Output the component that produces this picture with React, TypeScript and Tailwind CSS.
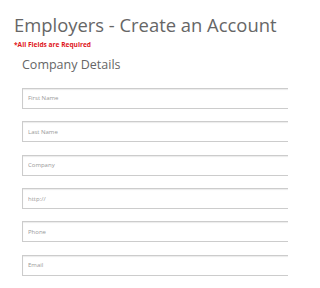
import React from "react";

const fields = ["First Name", "Last Name", "Company", "http://", "Phone", "Email"];

export default function App() {
  return (
    <div className="h-[288px] w-[288px] overflow-hidden bg-white font-['Open_Sans',sans-serif]">
      <div className="pl-[14px] pt-[13px]">
        <h1 className="whitespace-nowrap text-[18.4px] leading-[24px] text-[#666]">Employers - Create an Account</h1>
        <p className="mt-[3px] text-[6.6px] font-bold leading-[9px] text-[#e0161b]">*All Fields are Required</p>
        <h2 className="mt-[7.5px] pl-[8px] text-[12.5px] leading-[16px] text-[#666]">Company Details</h2>
      </div>
      <form className="mt-[15.4px] flex w-[320px] flex-col gap-[12.4px] pl-[22px]">
        {fields.map(f => (
          <input
            key={f}
            type="text"
            placeholder={f}
            className="h-[21px] w-[300px] border border-[#ccc] px-[5px] text-[6px] shadow-[inset_0_1px_1px_rgba(0,0,0,0.08)] outline-none placeholder:text-[#999]"
          />
        ))}
      </form>
    </div>
  );
}
